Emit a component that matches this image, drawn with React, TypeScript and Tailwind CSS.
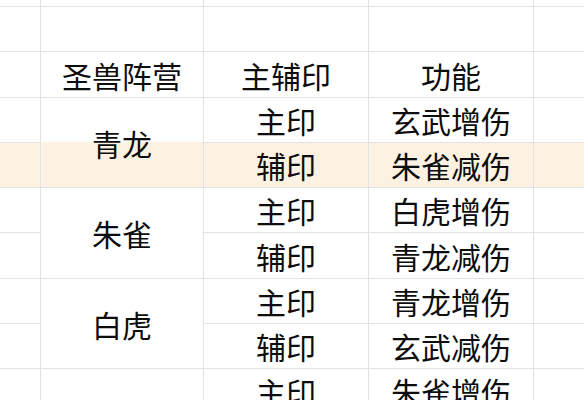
import React from 'react';

const groups = [
  { name: '青龙', rows: [['主印', '玄武增伤'], ['辅印', '朱雀减伤']] },
  { name: '朱雀', rows: [['主印', '白虎增伤'], ['辅印', '青龙减伤']] },
  { name: '白虎', rows: [['主印', '青龙增伤'], ['辅印', '玄武减伤']] },
  { name: '玄武', rows: [['主印', '朱雀增伤'], ['辅印', '白虎减伤']] },
];

// grid row 5 (the 辅印 / 朱雀减伤 row) is the highlighted one
const HL_ROW = 5;

function Cell({ children, hl, className = '' }: { children?: React.ReactNode; hl?: boolean; className?: string }) {
  return (
    <div className={`flex items-center justify-center ${hl ? 'bg-[#fdf2e2]' : 'bg-white'} ${className}`}>
      {children}
    </div>
  );
}

export default function App() {
  const cells: React.ReactNode[] = [];

  // top sliver row + empty row
  for (let r = 0; r < 2; r++) {
    for (let c = 0; c < 5; c++) cells.push(<Cell key={`e-${r}-${c}`} />);
  }

  // header
  cells.push(<Cell key="h0" />);
  cells.push(<Cell key="h1">圣兽阵营</Cell>);
  cells.push(<Cell key="h2">主辅印</Cell>);
  cells.push(<Cell key="h3">功能</Cell>);
  cells.push(<Cell key="h4" />);

  let gridRow = 4;
  groups.forEach((g) => {
    g.rows.forEach(([seal, effect], i) => {
      const hl = gridRow === HL_ROW;
      cells.push(<Cell key={`${g.name}-l-${i}`} hl={hl} />);
      if (i === 0) {
        const spansHl = gridRow + 1 === HL_ROW;
        cells.push(
          <div
            key={`${g.name}-m`}
            className={`row-span-2 flex items-center justify-center ${
              spansHl ? 'bg-[linear-gradient(to_bottom,#ffffff_44px,#fdf2e2_44px)]' : 'bg-white'
            }`}
          >
            {g.name}
          </div>
        );
      }
      cells.push(<Cell key={`${g.name}-s-${i}`} hl={hl}>{seal}</Cell>);
      cells.push(<Cell key={`${g.name}-f-${i}`} hl={hl}>{effect}</Cell>);
      cells.push(<Cell key={`${g.name}-r-${i}`} hl={hl} />);
      gridRow++;
    });
  });

  return (
    <div className="h-[400px] w-[584px] overflow-hidden bg-white">
      <div className="grid grid-cols-[40px_162px_164px_164px_1fr] grid-rows-[6px_44px_45px_44px_44px_44px_45px_44px_44px_44px_44px] gap-px bg-[#e2e2e2] font-['Noto_Sans_CJK_SC',sans-serif] text-[30px] leading-none text-[#0d0d0d]">
        {cells}
      </div>
    </div>
  );
}
